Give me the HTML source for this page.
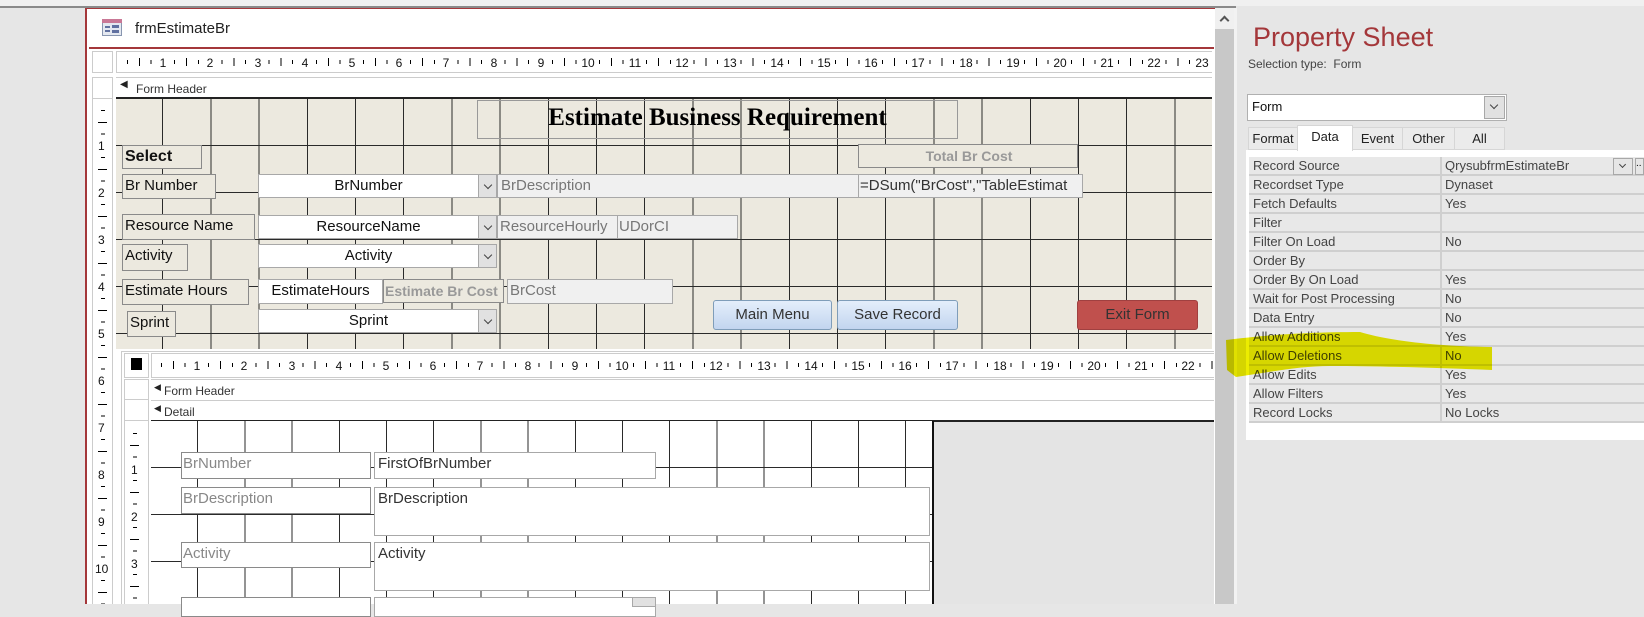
<!DOCTYPE html>
<html><head><meta charset="utf-8"><style>
*{margin:0;padding:0;box-sizing:border-box}
body{width:1644px;height:604px;overflow:hidden;background:#e6e6e6;font-family:"Liberation Sans",sans-serif;position:relative}
.a{position:absolute}
.lbl{position:absolute;background:#ece9df;border:1px solid #8a8a8a;font-size:15px;color:#111;padding-left:2px;line-height:22px;white-space:nowrap;overflow:hidden}
.cb{position:absolute;background:#fff;border:1px solid #a8a8a8;font-size:15px;color:#111;text-align:center;line-height:22px}
.dd{position:absolute;background:#e1e1e1;border:1px solid #a8a8a8;width:19px}
.dd:after{content:"";position:absolute;left:6px;top:7px;width:5px;height:5px;border-right:1px solid #444;border-bottom:1px solid #444;transform:rotate(45deg)}
.tb{position:absolute;background:#f0f0f0;border:1px solid #a8a8a8;font-size:15px;color:#777;line-height:22px;padding-left:3px;white-space:nowrap;overflow:hidden}
.btn{position:absolute;border:1px solid #7f9db9;border-radius:3px;background:linear-gradient(#e4eefb,#c2d5ef);font-size:15px;color:#333;text-align:center;line-height:27px}
.rn{position:absolute;font-size:12px;color:#111;transform:translateX(-50%)}
.vn{position:absolute;font-size:12px;color:#111}
.sl{position:absolute;border:1px solid #8a8a8a;background:#fff;font-size:15px;color:#888;line-height:22px;padding-left:1px}
.sb{position:absolute;border:1px solid #a8a8a8;background:#fff;font-size:15px;color:#333;line-height:22px;padding-left:3px}
.pr{position:absolute;left:1249px;width:395px;height:19px;font-size:13px;color:#444;line-height:18px;border-bottom:2px solid #cfcfcf;background:#e8e8e8}
.pr span{position:absolute;left:4px}
.pr b{font-weight:normal;position:absolute;left:196px}
.pr:before{content:"";position:absolute;left:191px;top:0;width:2px;height:19px;background:#cfcfcf}
.tab{position:absolute;top:127px;height:23px;background:#ebebeb;border:1px solid #d6d6d6;font-size:13px;color:#222;text-align:center;line-height:22px}
</style></head><body>
<div class="a" style="left:0;top:0;width:1644px;height:6px;background:#f0f0f0"></div>
<div class="a" style="left:0;top:6px;width:1236px;height:2px;background:#8a8a8a"></div>
<div class="a" style="left:85px;top:8px;width:1130px;height:596px;background:#fff;border-left:2px solid #a4373a;border-top:1px solid #a4373a"></div>
<div class="a" style="left:102px;top:19px;width:20px;height:17px;border:1px solid #8896b0;background:#e4e8f0"></div>
<div class="a" style="left:102px;top:19px;width:20px;height:4px;background:#c97896"></div>
<div class="a" style="left:105px;top:26px;width:5px;height:2px;background:#6070a0"></div>
<div class="a" style="left:105px;top:30px;width:5px;height:2px;background:#6070a0"></div>
<div class="a" style="left:112px;top:25px;width:7px;height:3px;background:#6070a0"></div>
<div class="a" style="left:112px;top:30px;width:7px;height:3px;background:#6070a0"></div>
<div class="a" style="left:135px;top:20px;font-size:15px;color:#222">frmEstimateBr</div>
<div class="a" style="left:89px;top:47px;width:1125px;height:2px;background:#a4373a"></div>
<div class="a" style="left:92px;top:51px;width:21px;height:22px;border:1px solid #ccc"></div>
<div class="a" style="left:116px;top:51px;width:1096px;height:22px;border:1px solid #ccc;border-right:none"></div>
<div class="a" style="left:127px;top:60px;width:1084px;height:4px;background:repeating-linear-gradient(to right,#000 0 1px,transparent 1px 23.6px)"></div>
<div class="a" style="left:139px;top:58px;width:1072px;height:8px;background:repeating-linear-gradient(to right,#000 0 1px,transparent 1px 47.2px)"></div>
<div class="a" style="left:116px;top:56px;width:1096px;height:14px">
<span class="rn" style="left:47px;background:#fff">1</span><span class="rn" style="left:94px;background:#fff">2</span><span class="rn" style="left:142px;background:#fff">3</span><span class="rn" style="left:189px;background:#fff">4</span><span class="rn" style="left:236px;background:#fff">5</span><span class="rn" style="left:283px;background:#fff">6</span><span class="rn" style="left:330px;background:#fff">7</span><span class="rn" style="left:378px;background:#fff">8</span><span class="rn" style="left:425px;background:#fff">9</span><span class="rn" style="left:472px;background:#fff">10</span><span class="rn" style="left:519px;background:#fff">11</span><span class="rn" style="left:566px;background:#fff">12</span><span class="rn" style="left:614px;background:#fff">13</span><span class="rn" style="left:661px;background:#fff">14</span><span class="rn" style="left:708px;background:#fff">15</span><span class="rn" style="left:755px;background:#fff">16</span><span class="rn" style="left:802px;background:#fff">17</span><span class="rn" style="left:850px;background:#fff">18</span><span class="rn" style="left:897px;background:#fff">19</span><span class="rn" style="left:944px;background:#fff">20</span><span class="rn" style="left:991px;background:#fff">21</span><span class="rn" style="left:1038px;background:#fff">22</span><span class="rn" style="left:1086px;background:#fff">23</span></div>
<div class="a" style="left:92px;top:77px;width:21px;height:527px;border:1px solid #ccc;border-bottom:none"></div>
<div class="a" style="left:92px;top:77px;width:21px;height:22px;border-bottom:1px solid #ccc"></div>
<div class="a" style="left:101px;top:110px;width:4px;height:494px;background:repeating-linear-gradient(to bottom,#000 0 1px,transparent 1px 23.5px)"></div>
<div class="a" style="left:98px;top:122px;width:9px;height:482px;background:repeating-linear-gradient(to bottom,#000 0 1px,transparent 1px 47px)"></div>
<div class="vn" style="left:98px;top:139px;background:#fff">1</div><div class="vn" style="left:98px;top:186px;background:#fff">2</div><div class="vn" style="left:98px;top:233px;background:#fff">3</div><div class="vn" style="left:98px;top:280px;background:#fff">4</div><div class="vn" style="left:98px;top:327px;background:#fff">5</div><div class="vn" style="left:98px;top:374px;background:#fff">6</div><div class="vn" style="left:98px;top:421px;background:#fff">7</div><div class="vn" style="left:98px;top:468px;background:#fff">8</div><div class="vn" style="left:98px;top:515px;background:#fff">9</div><div class="vn" style="left:95px;top:562px;background:#fff">10</div>
<div class="a" style="left:116px;top:77px;width:1096px;height:22px;border-top:1px solid #ccc;border-bottom:2px solid #222"></div>
<div class="a" style="left:120px;top:79px;font-size:10px;color:#222">◀</div>
<div class="a" style="left:136px;top:82px;font-size:12px;color:#333">Form Header</div>
<div class="a" style="left:116px;top:99px;width:1096px;height:250px;background-color:#ece9df;background-image:repeating-linear-gradient(to right,transparent 0 47.2px,#2a2a2a 47.2px 48.2px),repeating-linear-gradient(to bottom,transparent 0 46px,#2a2a2a 46px 47px);background-position:-1px 0,0 0"></div>
<div class="a" style="left:477px;top:100px;width:481px;height:39px;border:1px solid #999"></div>
<div class="a" style="left:477px;top:100px;width:481px;height:39px;text-align:center;font-family:'Liberation Serif',serif;font-weight:bold;font-size:25px;line-height:24px;padding-top:6px;color:#000">Estimate Business Requirement</div>
<div class="lbl" style="left:122px;top:145px;width:80px;height:24px;font-weight:bold;font-size:16px">Select</div>
<div class="lbl" style="left:122px;top:174px;width:94px;height:25px">Br Number</div>
<div class="cb" style="left:258px;top:174px;width:221px;height:24px">BrNumber</div><div class="dd" style="left:478px;top:174px;height:24px"></div>
<div class="tb" style="left:497px;top:174px;width:362px;height:24px">BrDescription</div>
<div class="tb" style="left:858px;top:174px;width:225px;height:24px;color:#333;padding-left:1px">=DSum("BrCost","TableEstimat</div>
<div class="lbl" style="left:858px;top:144px;width:220px;height:24px;font-weight:bold;color:#999;text-align:center;font-size:14px">Total Br Cost</div>
<div class="lbl" style="left:122px;top:214px;width:133px;height:26px">Resource Name</div>
<div class="cb" style="left:258px;top:215px;width:221px;height:24px">ResourceName</div><div class="dd" style="left:478px;top:215px;height:24px"></div>
<div class="tb" style="left:497px;top:215px;width:121px;height:24px;padding-left:2px">ResourceHourly</div>
<div class="tb" style="left:617px;top:215px;width:121px;height:24px;padding-left:1px">UDorCI</div>
<div class="lbl" style="left:122px;top:244px;width:66px;height:27px">Activity</div>
<div class="cb" style="left:258px;top:244px;width:221px;height:24px">Activity</div><div class="dd" style="left:478px;top:244px;height:24px"></div>
<div class="lbl" style="left:122px;top:279px;width:127px;height:26px">Estimate Hours</div>
<div class="cb" style="left:258px;top:279px;width:125px;height:25px">EstimateHours</div>
<div class="lbl" style="left:383px;top:279px;width:121px;height:24px;font-weight:bold;color:#999;font-size:14px;padding-left:1px">Estimate Br Cost</div>
<div class="tb" style="left:507px;top:279px;width:166px;height:25px;padding-left:2px">BrCost</div>
<div class="lbl" style="left:127px;top:311px;width:49px;height:26px">Sprint</div>
<div class="cb" style="left:258px;top:309px;width:221px;height:24px">Sprint</div><div class="dd" style="left:478px;top:309px;height:24px"></div>
<div class="btn" style="left:713px;top:300px;width:119px;height:30px">Main Menu</div>
<div class="btn" style="left:837px;top:300px;width:121px;height:30px">Save Record</div>
<div class="btn" style="left:1077px;top:300px;width:121px;height:30px;background:#c0504d;border-color:#a04040">Exit Form</div>
<div class="a" style="left:116px;top:349px;width:1098px;height:255px;background:#fff"></div>
<div class="a" style="left:121px;top:351px;width:1093px;height:253px;border-left:1px solid #ccc;border-top:1px solid #ccc"></div>
<div class="a" style="left:124px;top:353px;width:25px;height:25px;border:1px solid #ccc"></div>
<div class="a" style="left:131px;top:358px;width:11px;height:12px;background:#000"></div>
<div class="a" style="left:151px;top:353px;width:1063px;height:25px;border:1px solid #ccc;border-right:none"></div>
<div class="a" style="left:161px;top:363px;width:1053px;height:4px;background:repeating-linear-gradient(to right,#000 0 1px,transparent 1px 23.6px)"></div>
<div class="a" style="left:173px;top:361px;width:1041px;height:8px;background:repeating-linear-gradient(to right,#000 0 1px,transparent 1px 47.2px)"></div>
<div class="a" style="left:150px;top:359px;width:1064px;height:14px">
<span class="rn" style="left:47px;background:#fff">1</span><span class="rn" style="left:94px;background:#fff">2</span><span class="rn" style="left:142px;background:#fff">3</span><span class="rn" style="left:189px;background:#fff">4</span><span class="rn" style="left:236px;background:#fff">5</span><span class="rn" style="left:283px;background:#fff">6</span><span class="rn" style="left:330px;background:#fff">7</span><span class="rn" style="left:378px;background:#fff">8</span><span class="rn" style="left:425px;background:#fff">9</span><span class="rn" style="left:472px;background:#fff">10</span><span class="rn" style="left:519px;background:#fff">11</span><span class="rn" style="left:566px;background:#fff">12</span><span class="rn" style="left:614px;background:#fff">13</span><span class="rn" style="left:661px;background:#fff">14</span><span class="rn" style="left:708px;background:#fff">15</span><span class="rn" style="left:755px;background:#fff">16</span><span class="rn" style="left:802px;background:#fff">17</span><span class="rn" style="left:850px;background:#fff">18</span><span class="rn" style="left:897px;background:#fff">19</span><span class="rn" style="left:944px;background:#fff">20</span><span class="rn" style="left:991px;background:#fff">21</span><span class="rn" style="left:1038px;background:#fff">22</span></div>
<div class="a" style="left:124px;top:379px;width:25px;height:225px;border:1px solid #ccc;border-bottom:none"></div>
<div class="a" style="left:124px;top:379px;width:25px;height:21px;border-bottom:1px solid #ccc"></div>
<div class="a" style="left:124px;top:400px;width:25px;height:21px;border-bottom:1px solid #ccc"></div>
<div class="a" style="left:151px;top:379px;width:1063px;height:22px;border-top:1px solid #ccc;border-bottom:1px solid #ccc"></div>
<div class="a" style="left:154px;top:382px;font-size:9px;color:#222">◀</div>
<div class="a" style="left:164px;top:384px;font-size:12px;color:#333">Form Header</div>
<div class="a" style="left:151px;top:401px;width:1063px;height:21px;border-bottom:2px solid #222"></div>
<div class="a" style="left:154px;top:403px;font-size:9px;color:#222">◀</div>
<div class="a" style="left:164px;top:405px;font-size:12px;color:#333">Detail</div>
<div class="a" style="left:133px;top:433px;width:4px;height:171px;background:repeating-linear-gradient(to bottom,#000 0 1px,transparent 1px 23.5px)"></div>
<div class="a" style="left:130px;top:445px;width:9px;height:159px;background:repeating-linear-gradient(to bottom,#000 0 1px,transparent 1px 47px)"></div>
<div class="vn" style="left:131px;top:463px;background:#fff">1</div><div class="vn" style="left:131px;top:510px;background:#fff">2</div><div class="vn" style="left:131px;top:557px;background:#fff">3</div>
<div class="a" style="left:151px;top:421px;width:783px;height:183px;background-color:#fff;background-image:repeating-linear-gradient(to right,transparent 0 46.2px,#2a2a2a 46.2px 47.2px),repeating-linear-gradient(to bottom,transparent 0 46px,#2a2a2a 46px 47px);border-right:2px solid #111"></div>
<div class="a" style="left:934px;top:422px;width:280px;height:182px;background:#e4e4e4"></div>
<div class="sl" style="left:181px;top:452px;width:190px;height:27px">BrNumber</div>
<div class="sb" style="left:374px;top:452px;width:282px;height:27px">FirstOfBrNumber</div>
<div class="sl" style="left:181px;top:487px;width:190px;height:27px">BrDescription</div>
<div class="sb" style="left:374px;top:487px;width:556px;height:49px">BrDescription</div>
<div class="sl" style="left:181px;top:542px;width:190px;height:26px">Activity</div>
<div class="sb" style="left:374px;top:542px;width:556px;height:49px">Activity</div>
<div class="sl" style="left:181px;top:597px;width:190px;height:20px"></div>
<div class="sb" style="left:374px;top:597px;width:282px;height:20px"></div>
<div class="a" style="left:632px;top:597px;width:24px;height:10px;background:#e1e1e1;border:1px solid #a8a8a8"></div>
<div class="a" style="left:1215px;top:8px;width:19px;height:596px;background:#c8c8c8"></div>
<div class="a" style="left:1215px;top:8px;width:19px;height:21px;background:#f0f0f0"></div>
<div class="a" style="left:1221px;top:17px;width:7px;height:7px;border-left:2px solid #555;border-top:2px solid #555;transform:rotate(45deg)"></div>
<div class="a" style="left:1234px;top:8px;width:3px;height:596px;background:#f2f2f2"></div>
<div class="a" style="left:1253px;top:22px;font-size:27px;color:#a4373a">Property Sheet</div>
<div class="a" style="left:1248px;top:57px;font-size:12px;color:#444">Selection type:&nbsp; Form</div>
<div class="a" style="left:1247px;top:94px;width:260px;height:27px;background:#fff;border:1px solid #b0b0b0;font-size:13px;line-height:24px;padding-left:4px;color:#111">Form</div>
<div class="a" style="left:1484px;top:96px;width:21px;height:23px;background:#e1e1e1;border:1px solid #a8a8a8"></div>
<div class="a" style="left:1491px;top:102px;width:6px;height:6px;border-right:1px solid #444;border-bottom:1px solid #444;transform:rotate(45deg)"></div>
<div class="a" style="left:1246px;top:150px;width:398px;height:290px;background:#fff"></div>
<div class="tab" style="left:1248px;width:50px">Format</div>
<div class="tab" style="left:1297px;top:125px;width:56px;height:26px;background:#fff;border-bottom:none">Data</div>
<div class="tab" style="left:1352px;width:51px">Event</div>
<div class="tab" style="left:1402px;width:53px">Other</div>
<div class="tab" style="left:1454px;width:51px">All</div>
<div class="pr" style="top:157px"><span>Record Source</span><b>QrysubfrmEstimateBr</b></div>
<div class="pr" style="top:176px"><span>Recordset Type</span><b>Dynaset</b></div>
<div class="pr" style="top:195px"><span>Fetch Defaults</span><b>Yes</b></div>
<div class="pr" style="top:214px"><span>Filter</span><b></b></div>
<div class="pr" style="top:233px"><span>Filter On Load</span><b>No</b></div>
<div class="pr" style="top:252px"><span>Order By</span><b></b></div>
<div class="pr" style="top:271px"><span>Order By On Load</span><b>Yes</b></div>
<div class="pr" style="top:290px"><span>Wait for Post Processing</span><b>No</b></div>
<div class="pr" style="top:309px"><span>Data Entry</span><b>No</b></div>
<div class="pr" style="top:328px"><span>Allow Additions</span><b>Yes</b></div>
<div class="pr" style="top:347px"><span>Allow Deletions</span><b>No</b></div>
<div class="pr" style="top:366px"><span>Allow Edits</span><b>Yes</b></div>
<div class="pr" style="top:385px"><span>Allow Filters</span><b>Yes</b></div>
<div class="pr" style="top:404px"><span>Record Locks</span><b>No Locks</b></div>
<div class="a" style="left:1613px;top:158px;width:20px;height:17px;background:#e6e6e6;border:1px solid #a8a8a8"></div>
<div class="a" style="left:1620px;top:162px;width:5px;height:5px;border-right:1px solid #444;border-bottom:1px solid #444;transform:rotate(45deg)"></div>
<div class="a" style="left:1635px;top:158px;width:9px;height:17px;background:#e6e6e6;border:1px solid #a8a8a8;font-size:10px;line-height:10px">..</div>
<svg class="a" style="left:0;top:0;mix-blend-mode:multiply" width="1644" height="604"><path d="M1226 340 C1260 336 1300 332 1360 332 C1380 338 1420 346 1492 347 L1492 370 C1440 368 1380 366 1330 366 C1300 366 1270 372 1236 377 L1227 370 Z" fill="#ecec00"/></svg>
</body></html>
